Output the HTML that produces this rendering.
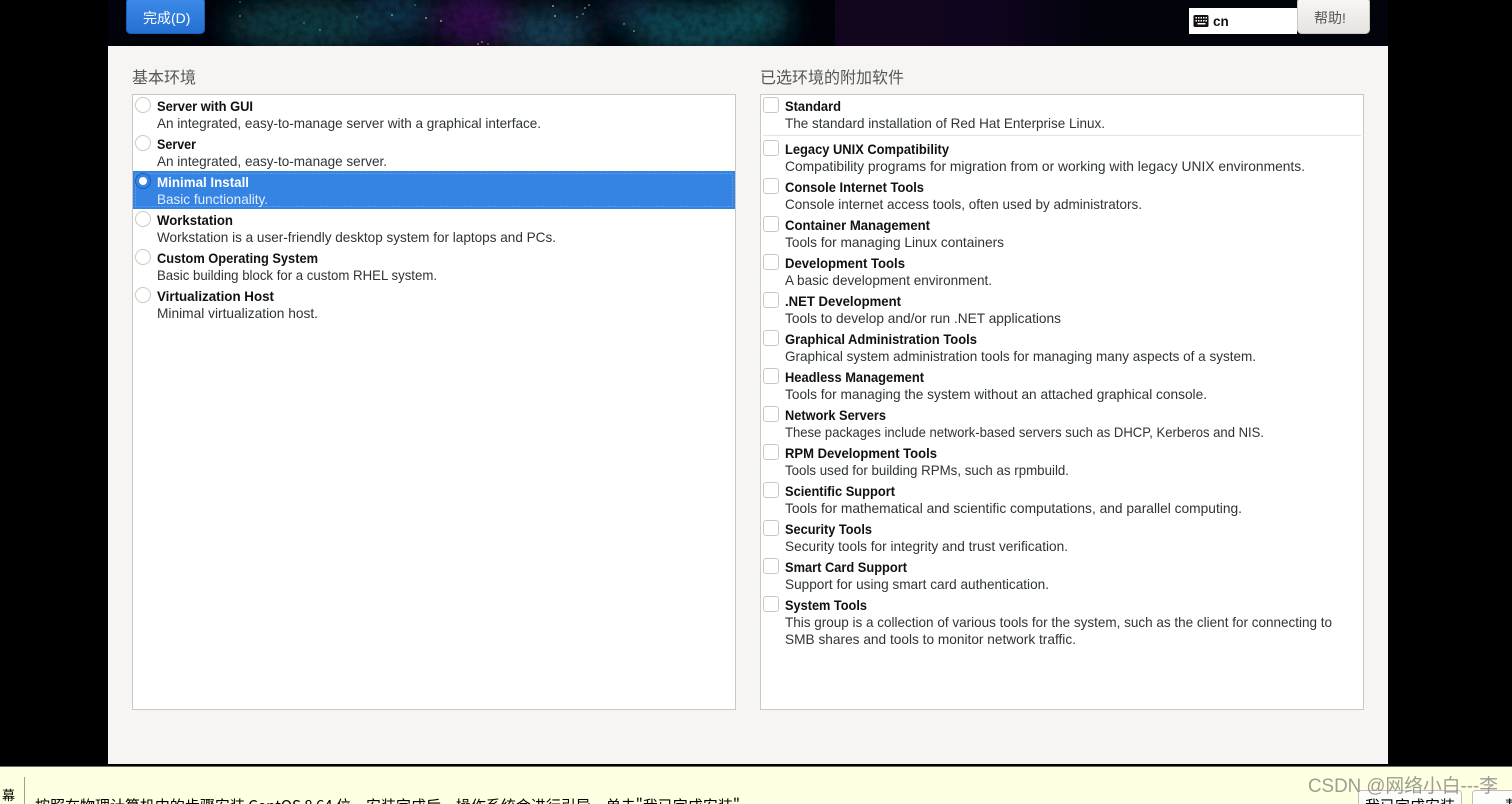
<!DOCTYPE html>
<html lang="zh">
<head>
<meta charset="utf-8">
<title>Software Selection</title>
<style>
html,body{margin:0;padding:0;width:1512px;height:804px;overflow:hidden;background:#000}
svg{display:block}
text{font-family:"Liberation Sans","Noto Sans CJK SC",sans-serif;font-size:14px;fill:#2e3436}
.b{font-weight:bold;fill:#111}
.h{font-family:"Noto Sans CJK SC","WenQuanYi Zen Hei",sans-serif;font-size:16px;fill:#555753}
.r{fill:#fff;stroke:#cdc7c2;stroke-width:1}
.y{font-family:"WenQuanYi Zen Hei","Noto Sans CJK SC",sans-serif;font-size:15px;fill:#000}
</style>
</head>
<body>
<svg width="1512" height="804" viewBox="0 0 1512 804" xmlns="http://www.w3.org/2000/svg">
<defs>
<filter id="bl" x="-30%" y="-100%" width="160%" height="300%"><feGaussianBlur stdDeviation="13"/></filter>
<filter id="nz" x="0" y="0" width="100%" height="100%">
<feTurbulence type="fractalNoise" baseFrequency="0.14" numOctaves="3" seed="6"/>
<feColorMatrix values="0 0 0 0 0 0 0 0 0 0 0 0 0 0 0 1.5 0 0 0 -0.55"/>
</filter>
<linearGradient id="done" x1="0" y1="0" x2="0" y2="1"><stop offset="0" stop-color="#3d8ae8"/><stop offset="1" stop-color="#2470d2"/></linearGradient>
<linearGradient id="help" x1="0" y1="0" x2="0" y2="1"><stop offset="0" stop-color="#f8f7f6"/><stop offset="1" stop-color="#e6e3e0"/></linearGradient>
<linearGradient id="dk" x1="0" y1="0" x2="1" y2="0"><stop offset="0" stop-color="#12061f"/><stop offset=".6" stop-color="#10051e"/><stop offset="1" stop-color="#02030c"/></linearGradient>
<clipPath id="ban"><rect x="108" y="0" width="1280" height="46"/></clipPath>
</defs>

<rect width="1512" height="804" fill="#000"/>

<!-- banner -->
<g clip-path="url(#ban)">
<rect x="108" y="0" width="1280" height="46" fill="#02040c"/>
<g filter="url(#bl)">
<ellipse cx="310" cy="25" rx="85" ry="26" fill="#0c3a42"/>
<ellipse cx="395" cy="14" rx="36" ry="26" fill="#10334a"/>
<ellipse cx="475" cy="20" rx="40" ry="28" fill="#33104f"/>
<ellipse cx="550" cy="32" rx="44" ry="24" fill="#123c52"/>
<ellipse cx="640" cy="12" rx="40" ry="16" fill="#0b2a44"/>
<ellipse cx="700" cy="28" rx="70" ry="26" fill="#0d4752"/>
<ellipse cx="755" cy="18" rx="35" ry="24" fill="#0c4a52"/>
</g>
<rect x="108" y="0" width="730" height="46" filter="url(#nz)" opacity=".45"/>
<rect x="835" y="0" width="260" height="46" fill="url(#dk)"/>
<g fill="#4fd0c4" opacity=".75">
<circle cx="240" cy="2" r=".7"/><circle cx="240" cy="16" r=".9"/><circle cx="304" cy="23" r=".7"/><circle cx="320" cy="30" r=".9"/><circle cx="357" cy="17" r=".8"/><circle cx="392" cy="15" r="1"/><circle cx="415" cy="5" r=".7"/>
</g>
<g fill="#e8dcc4" opacity=".8">
<circle cx="426" cy="18" r=".9"/><circle cx="441" cy="21" r=".9"/><circle cx="553" cy="6" r=".9"/><circle cx="555" cy="16" r=".9"/><circle cx="585" cy="8" r=".8"/><circle cx="589" cy="5" r=".8"/><circle cx="583" cy="14" r=".7"/><circle cx="577" cy="17" r=".7"/><circle cx="634" cy="31" r=".8"/><circle cx="624" cy="24" r=".7"/>
<circle cx="482" cy="42" r=".9" fill="#e0a070"/><circle cx="478" cy="44" r=".9" fill="#e0a070"/><circle cx="488" cy="44" r=".8" fill="#e0a070"/>
</g>
</g>

<!-- panel -->
<rect x="108" y="46" width="1280" height="718" fill="#f6f5f4"/>

<!-- top controls -->
<rect x="126.500" y="-2" width="78" height="35.500" rx="4" fill="url(#done)" stroke="#1a5fb4"/>
<text x="143" y="23" style="fill:#fff;font-size:14px">完成(D)</text>
<rect x="1189" y="8" width="108" height="26" fill="#fff"/>
<rect x="1193.500" y="15" width="15" height="12" rx="1.500" fill="#111"/>
<g fill="#fff"><rect x="1195.500" y="17" width="1.500" height="1.500"/><rect x="1198" y="17" width="1.500" height="1.500"/><rect x="1200.500" y="17" width="1.500" height="1.500"/><rect x="1203" y="17" width="1.500" height="1.500"/><rect x="1205.500" y="17" width="1.500" height="1.500"/><rect x="1195.500" y="20" width="1.500" height="1.500"/><rect x="1198" y="20" width="1.500" height="1.500"/><rect x="1200.500" y="20" width="1.500" height="1.500"/><rect x="1203" y="20" width="1.500" height="1.500"/><rect x="1205.500" y="20" width="1.500" height="1.500"/><rect x="1197.500" y="23" width="8" height="1.500"/></g>
<text x="1213" y="26" class="b" style="font-size:13.500px">cn</text>
<rect x="1297.500" y="-2" width="72" height="35.500" rx="4" fill="url(#help)" stroke="#cdc7c2"/>
<text x="1314" y="23" style="fill:#555753;font-size:14px">帮助!</text>

<!-- headings -->
<text class="h" x="132" y="83">基本环境</text>
<text class="h" x="760" y="83">已选环境的附加软件</text>

<!-- list boxes -->
<rect x="132.500" y="94.500" width="603" height="615" fill="#fff" stroke="#cdc7c2"/>
<rect x="760.500" y="94.500" width="603" height="615" fill="#fff" stroke="#cdc7c2"/>
<rect x="133" y="171" width="602" height="38" fill="#3584e4"/>
<rect x="135.500" y="173.500" width="597" height="33" fill="none" stroke="#7fb0ee" stroke-width="1" stroke-dasharray="1 2"/>
<line x1="763" y1="135.500" x2="1361" y2="135.500" stroke="#e6e4e1"/>

<!-- radios -->
<circle class="r" cx="143" cy="105" r="7.500"/>
<circle class="r" cx="143" cy="143" r="7.500"/>
<circle cx="143" cy="181" r="7.500" fill="#3584e4" stroke="#1a5fb4"/>
<circle cx="143" cy="181" r="4" fill="#fff"/>
<circle class="r" cx="143" cy="219" r="7.500"/>
<circle class="r" cx="143" cy="257" r="7.500"/>
<circle class="r" cx="143" cy="295" r="7.500"/>

<!-- left list -->
<text class="b" x="157" y="111" textLength="96" lengthAdjust="spacingAndGlyphs">Server with GUI</text>
<text x="157" y="128" textLength="384" lengthAdjust="spacingAndGlyphs">An integrated, easy-to-manage server with a graphical interface.</text>
<text class="b" x="157" y="149" textLength="39" lengthAdjust="spacingAndGlyphs">Server</text>
<text x="157" y="166" textLength="230" lengthAdjust="spacingAndGlyphs">An integrated, easy-to-manage server.</text>
<text class="b" x="157" y="187" textLength="92" lengthAdjust="spacingAndGlyphs" style="fill:#fff">Minimal Install</text>
<text x="157" y="204" textLength="111" lengthAdjust="spacingAndGlyphs" style="fill:#e4eefb">Basic functionality.</text>
<text class="b" x="157" y="225" textLength="76" lengthAdjust="spacingAndGlyphs">Workstation</text>
<text x="157" y="242" textLength="399" lengthAdjust="spacingAndGlyphs">Workstation is a user-friendly desktop system for laptops and PCs.</text>
<text class="b" x="157" y="263" textLength="161" lengthAdjust="spacingAndGlyphs">Custom Operating System</text>
<text x="157" y="280" textLength="280" lengthAdjust="spacingAndGlyphs">Basic building block for a custom RHEL system.</text>
<text class="b" x="157" y="301" textLength="117" lengthAdjust="spacingAndGlyphs">Virtualization Host</text>
<text x="157" y="318" textLength="161" lengthAdjust="spacingAndGlyphs">Minimal virtualization host.</text>

<!-- checkboxes -->
<g fill="#fff" stroke="#cdc7c2">
<rect x="763.500" y="97.500" width="15" height="15" rx="2.500"/>
<rect x="763.500" y="140.500" width="15" height="15" rx="2.500"/>
<rect x="763.500" y="178.500" width="15" height="15" rx="2.500"/>
<rect x="763.500" y="216.500" width="15" height="15" rx="2.500"/>
<rect x="763.500" y="254.500" width="15" height="15" rx="2.500"/>
<rect x="763.500" y="292.500" width="15" height="15" rx="2.500"/>
<rect x="763.500" y="330.500" width="15" height="15" rx="2.500"/>
<rect x="763.500" y="368.500" width="15" height="15" rx="2.500"/>
<rect x="763.500" y="406.500" width="15" height="15" rx="2.500"/>
<rect x="763.500" y="444.500" width="15" height="15" rx="2.500"/>
<rect x="763.500" y="482.500" width="15" height="15" rx="2.500"/>
<rect x="763.500" y="520.500" width="15" height="15" rx="2.500"/>
<rect x="763.500" y="558.500" width="15" height="15" rx="2.500"/>
<rect x="763.500" y="596.500" width="15" height="15" rx="2.500"/>
</g>

<!-- right list -->
<text class="b" x="785" y="111" textLength="56" lengthAdjust="spacingAndGlyphs">Standard</text>
<text x="785" y="128" textLength="320" lengthAdjust="spacingAndGlyphs">The standard installation of Red Hat Enterprise Linux.</text>
<text class="b" x="785" y="154" textLength="164" lengthAdjust="spacingAndGlyphs">Legacy UNIX Compatibility</text>
<text x="785" y="171" textLength="520" lengthAdjust="spacingAndGlyphs">Compatibility programs for migration from or working with legacy UNIX environments.</text>
<text class="b" x="785" y="192" textLength="139" lengthAdjust="spacingAndGlyphs">Console Internet Tools</text>
<text x="785" y="209" textLength="357" lengthAdjust="spacingAndGlyphs">Console internet access tools, often used by administrators.</text>
<text class="b" x="785" y="230" textLength="145" lengthAdjust="spacingAndGlyphs">Container Management</text>
<text x="785" y="247" textLength="219" lengthAdjust="spacingAndGlyphs">Tools for managing Linux containers</text>
<text class="b" x="785" y="268" textLength="120" lengthAdjust="spacingAndGlyphs">Development Tools</text>
<text x="785" y="285" textLength="207" lengthAdjust="spacingAndGlyphs">A basic development environment.</text>
<text class="b" x="785" y="306" textLength="116" lengthAdjust="spacingAndGlyphs">.NET Development</text>
<text x="785" y="323" textLength="276" lengthAdjust="spacingAndGlyphs">Tools to develop and/or run .NET applications</text>
<text class="b" x="785" y="344" textLength="192" lengthAdjust="spacingAndGlyphs">Graphical Administration Tools</text>
<text x="785" y="361" textLength="471" lengthAdjust="spacingAndGlyphs">Graphical system administration tools for managing many aspects of a system.</text>
<text class="b" x="785" y="382" textLength="139" lengthAdjust="spacingAndGlyphs">Headless Management</text>
<text x="785" y="399" textLength="422" lengthAdjust="spacingAndGlyphs">Tools for managing the system without an attached graphical console.</text>
<text class="b" x="785" y="420" textLength="101" lengthAdjust="spacingAndGlyphs">Network Servers</text>
<text x="785" y="437" textLength="479" lengthAdjust="spacingAndGlyphs">These packages include network-based servers such as DHCP, Kerberos and NIS.</text>
<text class="b" x="785" y="458" textLength="152" lengthAdjust="spacingAndGlyphs">RPM Development Tools</text>
<text x="785" y="475" textLength="284" lengthAdjust="spacingAndGlyphs">Tools used for building RPMs, such as rpmbuild.</text>
<text class="b" x="785" y="496" textLength="110" lengthAdjust="spacingAndGlyphs">Scientific Support</text>
<text x="785" y="513" textLength="457" lengthAdjust="spacingAndGlyphs">Tools for mathematical and scientific computations, and parallel computing.</text>
<text class="b" x="785" y="534" textLength="87" lengthAdjust="spacingAndGlyphs">Security Tools</text>
<text x="785" y="551" textLength="283" lengthAdjust="spacingAndGlyphs">Security tools for integrity and trust verification.</text>
<text class="b" x="785" y="572" textLength="122" lengthAdjust="spacingAndGlyphs">Smart Card Support</text>
<text x="785" y="589" textLength="264" lengthAdjust="spacingAndGlyphs">Support for using smart card authentication.</text>
<text class="b" x="785" y="610" textLength="82" lengthAdjust="spacingAndGlyphs">System Tools</text>
<text x="785" y="627" textLength="547" lengthAdjust="spacingAndGlyphs">This group is a collection of various tools for the system, such as the client for connecting to</text>
<text x="785" y="644" textLength="291" lengthAdjust="spacingAndGlyphs">SMB shares and tools to monitor network traffic.</text>

<!-- bottom strip -->
<rect x="0" y="764" width="1512" height="2" fill="#000"/>
<rect x="0" y="766" width="1512" height="1" fill="#6b6b60"/>
<rect x="0" y="767" width="1512" height="37" fill="#ffffe1"/>
<rect x="24" y="777" width="1" height="27" fill="#a0a090"/>
<text class="y" x="2" y="800" style="font-size:13px">幕</text>
<text class="y" x="35" y="811" textLength="705" lengthAdjust="spacingAndGlyphs">按照在物理计算机中的步骤安装 CentOS 8 64 位。安装完成后，操作系统会进行引导。单击"我已完成安装"</text>
<rect x="1358.500" y="790.500" width="103" height="30" rx="3" fill="#fdfdfb" stroke="#c0c0b8"/>
<rect x="1472.500" y="790.500" width="60" height="30" rx="3" fill="#fdfdfb" stroke="#c0c0b8"/>
<text class="y" x="1365" y="811" style="font-size:15px">我已完成安装</text>
<text class="y" x="1505" y="811" style="font-size:15px">帮</text>
<text x="1308" y="792" textLength="190" lengthAdjust="spacingAndGlyphs" style="font-size:19px;fill:#8c8c86;fill-opacity:.85">CSDN @网络小白---李</text>
</svg>
</body>
</html>
